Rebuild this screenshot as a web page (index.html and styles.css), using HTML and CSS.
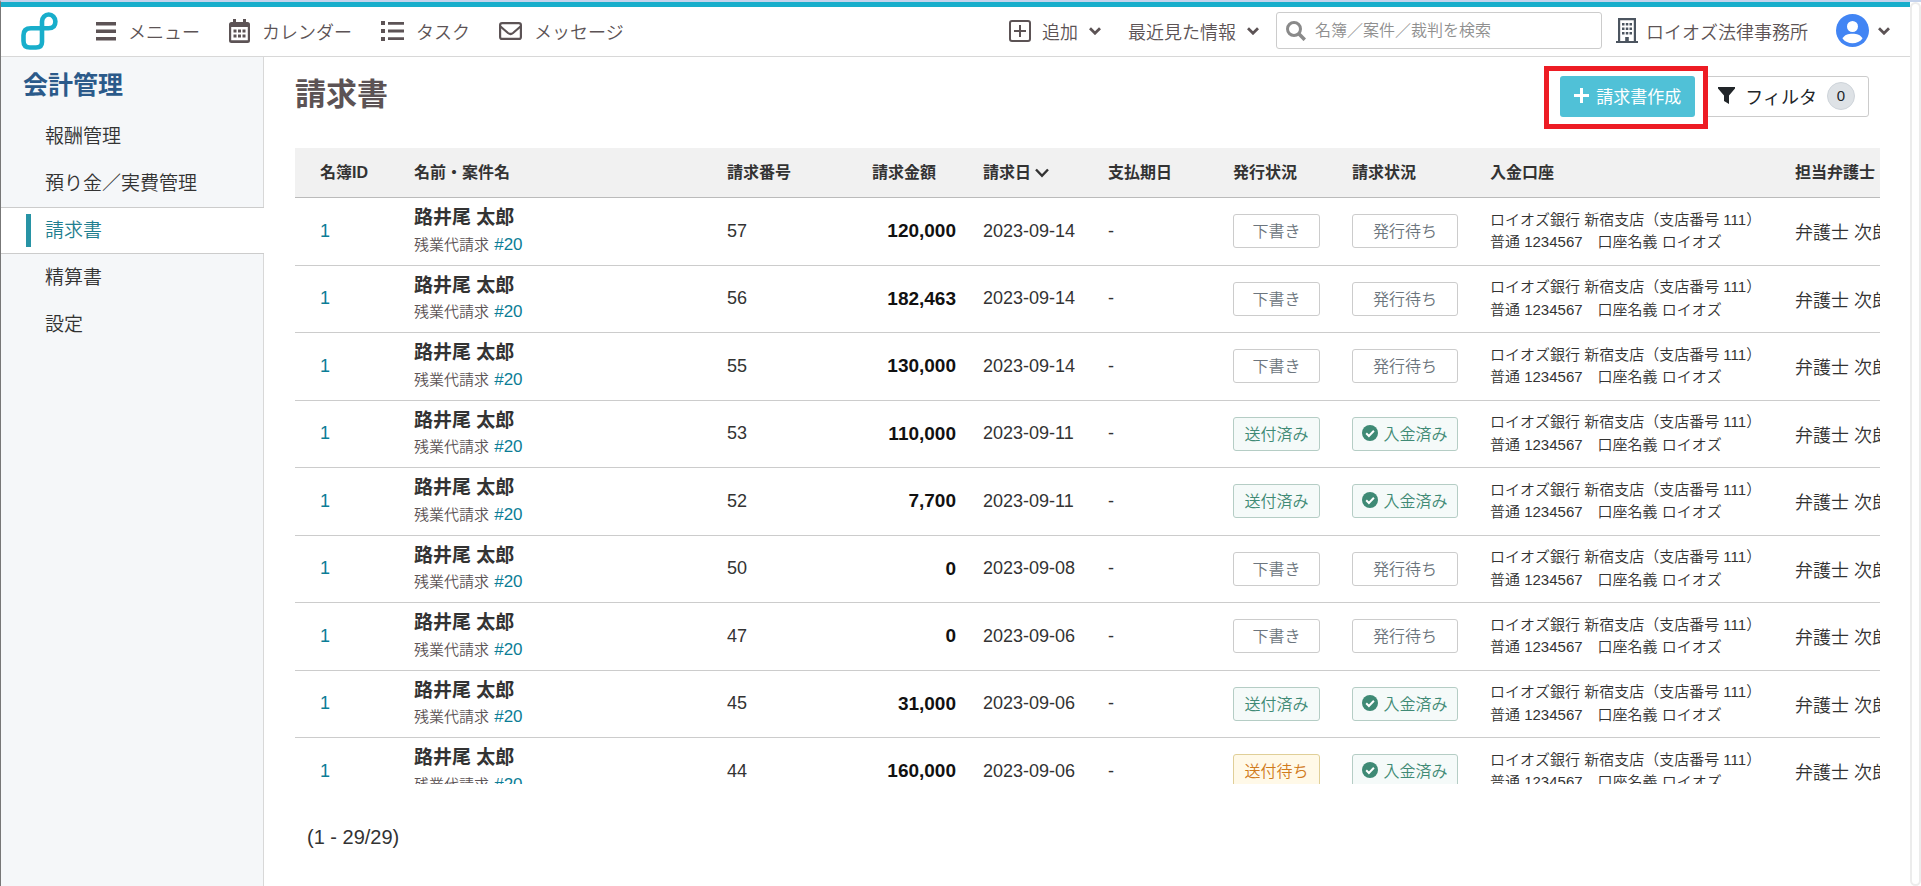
FILE: index.html
```html
<!DOCTYPE html>
<html lang="ja">
<head>
  <meta charset="UTF-8" />
  <title>請求書 | 会計管理</title>
  <meta name="viewport" content="width=device-width, initial-scale=1.0"/>
  <link rel="stylesheet" href="styles.css">
</head>
<body>
  <div class="page">
    <div class="app">
      <!-- ヘッダー -->
      <header class="header">
        <a class="logo" href="#" aria-label="ホーム">
          <svg width="40" height="42" viewBox="20 10 40 42" fill="none" stroke="#18aecb" stroke-width="4.600">
            <path d="M42 42V21.500a6.700 7 0 0 1 13.400 0c0 5-3 6.800-7 6.800H31c-5 0-7.500 2.500-7.500 7V41c0 4.500 2 6.500 6.500 6.500h6c4 0 6-2 6-5.500z"/>
          </svg>
        </a>

        <nav class="nav">
          <a href="#">
            <svg width="20" height="20" viewBox="0 0 20 20" fill="currentColor"><path d="M0 1h20v3.500H0zM0 8.500h20V12H0zM0 16h20v3.500H0z"/></svg>
            メニュー
          </a>
          <a href="#">
            <svg width="21" height="24" viewBox="0 0 21 24" fill="currentColor">
              <path fill-rule="evenodd" d="M4 0h3v3h7V0h3v3h1.500A2.500 2.500 0 0 1 21 5.500v16a2.500 2.500 0 0 1-2.500 2.500h-16A2.500 2.500 0 0 1 0 21.500v-16A2.500 2.500 0 0 1 2.500 3H4zM2.200 8v13.300h16.600V8z"/>
              <path d="M4.500 10.500h3v3h-3zM9 10.500h3v3H9zM13.500 10.500h3v3h-3zM4.500 15.500h3v3h-3zM9 15.500h3v3H9zM13.500 15.500h3v3h-3z"/>
            </svg>
            カレンダー
          </a>
          <a href="#">
            <svg width="23" height="20" viewBox="0 0 23 20" fill="currentColor"><path d="M0 0h4v4H0zM7 1h16v2.800H7zM0 8h4v4H0zM7 8.600h16v2.800H7zM0 16h4v4H0zM7 16.200h16V19H7z"/></svg>
            タスク
          </a>
          <a href="#">
            <svg width="23" height="18" viewBox="0 0 23 18" fill="none" stroke="currentColor" stroke-width="2.200"><rect x="1.100" y="1.100" width="20.800" height="15.800" rx="2"/><path d="M1.500 4.500l7.500 6.500q2.500 2 5 0l7.500-6.500"/></svg>
            メッセージ
          </a>
        </nav>

        <div class="tools">
          <button class="tool-button" type="button">
            <svg width="22" height="22" viewBox="0 0 22 22" fill="none" stroke="currentColor" stroke-width="2"><rect x="1" y="1" width="20" height="20" rx="2"/><path d="M11 5v12M5 11h12"/></svg>
            追加
            <svg class="caret" width="12" height="8" viewBox="0 0 12 8" fill="none" stroke="currentColor" stroke-width="2.800"><path d="M1 1.200l5 5 5-5"/></svg>
          </button>
          <button class="tool-button recent" type="button">
            最近見た情報
            <svg class="caret" width="12" height="8" viewBox="0 0 12 8" fill="none" stroke="currentColor" stroke-width="2.800"><path d="M1 1.200l5 5 5-5"/></svg>
          </button>
          <label class="search">
            <svg width="20" height="20" viewBox="0 0 20 20" fill="none" stroke="#8a8a8a"><circle cx="8" cy="8" r="6.500" stroke-width="3"/><path d="M12.800 12.800l6 6" stroke-width="3.600"/></svg>
            <input type="search" placeholder="名簿／案件／裁判を検索" aria-label="検索">
          </label>
          <a class="office" href="#">
            <svg width="22" height="25" viewBox="0 0 22 25" fill="#4c5560">
              <path fill-rule="evenodd" d="M2 0h18v23h2v2H0v-2h2zM4.200 2.200V23h5v-4h3.600v4h5V2.200z"/>
              <path d="M6 5h2.500v2.500H6zM9.800 5h2.500v2.500H9.800zM13.500 5H16v2.500h-2.500zM6 9.500h2.500V12H6zM9.800 9.500h2.500V12H9.800zM13.500 9.500H16V12h-2.500zM6 14h2.500v2.500H6zM9.800 14h2.500v2.500H9.800zM13.500 14H16v2.500h-2.500z"/>
            </svg>
            ロイオズ法律事務所
          </a>
          <button class="account" type="button" aria-label="アカウント">
            <svg width="33" height="33" viewBox="0 0 33 33"><circle cx="16.500" cy="16.500" r="16.500" fill="#4285f4"/><circle cx="16.500" cy="12.500" r="5.500" fill="#fff"/><path d="M6.500 24.500c2-3.700 5.500-4.700 10-4.700s8 1 10 4.700c-2.500 3.300-6 4.700-10 4.700s-7.500-1.400-10-4.700z" fill="#fff"/></svg>
            <svg class="caret" width="12" height="8" viewBox="0 0 12 8" fill="none" stroke="currentColor" stroke-width="2.800"><path d="M1 1.200l5 5 5-5"/></svg>
          </button>
        </div>
      </header>

      <div class="body">
        <!-- サイドメニュー -->
        <aside class="sidebar">
          <h2>会計管理</h2>
          <ul>
            <li><a href="#">報酬管理</a></li>
            <li><a href="#">預り金／実費管理</a></li>
            <li class="active"><a href="#" aria-current="page">請求書</a></li>
            <li><a href="#">精算書</a></li>
            <li><a href="#">設定</a></li>
          </ul>
        </aside>

        <main class="main">
          <div class="title-bar">
            <h1>請求書</h1>
            <div class="actions">
              <div class="highlight">
                <button class="create-button" type="button">
                  <svg width="15" height="15" viewBox="0 0 15 15" stroke="#fff" stroke-width="3"><path d="M7.500 0v15M0 7.500h15"/></svg>
                  請求書作成
                </button>
              </div>
              <button class="filter-button" type="button">
                <svg width="17" height="17" viewBox="0 0 17 17" fill="#212529"><path d="M0 0h17v1.500L11 8.500V17l-5-3V8.500L0 1.500z"/></svg>
                フィルタ
                <span class="count">0</span>
              </button>
            </div>
          </div>

          <!-- 請求書一覧 -->
          <div class="table-wrapper">
            <table class="invoices">
              <colgroup>
                <col class="col-id"><col class="col-name"><col class="col-number"><col class="col-amount"><col class="col-date">
                <col class="col-due"><col class="col-issue"><col class="col-status"><col class="col-bank"><col class="col-lawyer">
              </colgroup>
              <thead>
                <tr>
                  <th>名簿ID</th>
                  <th>名前・案件名</th>
                  <th>請求番号</th>
                  <th>請求金額</th>
                  <th>請求日 <svg width="14" height="10" viewBox="0 0 14 10" fill="none" stroke="#333" stroke-width="2.400"><path d="M1 1.500l6 6.300 6-6.300"/></svg></th>
                  <th>支払期日</th>
                  <th>発行状況</th>
                  <th>請求状況</th>
                  <th>入金口座</th>
                  <th>担当弁護士</th>
                </tr>
              </thead>
              <tbody id="invoiceRows"></tbody>
            </table>
          </div>
          <div class="pager">(1 - 29/29)</div>
        </main>
      </div>
    </div>
    <div class="scroll-rail"></div>
  </div>

  <script>
    const invoiceRows = document.getElementById("invoiceRows");

    // 番号, 金額, 請求日, 発行状況, 入金済みかどうか
    const invoices = [
      [57, "120,000", "2023-09-14", "下書き", false],
      [56, "182,463", "2023-09-14", "下書き", false],
      [55, "130,000", "2023-09-14", "下書き", false],
      [53, "110,000", "2023-09-11", "送付済み", true],
      [52, "7,700", "2023-09-11", "送付済み", true],
      [50, "0", "2023-09-08", "下書き", false],
      [47, "0", "2023-09-06", "下書き", false],
      [45, "31,000", "2023-09-06", "送付済み", true],
      [44, "160,000", "2023-09-06", "送付待ち", true]
    ];

    const issueClass = { "下書き": "", "送付済み": "done", "送付待ち": "waiting" };
    const check = '<svg width="16" height="16" viewBox="0 0 16 16"><circle cx="8" cy="8" r="8" fill="#3f8a75"/><path d="M4.200 8.300l2.700 2.700 5-5.200" fill="none" stroke="#fff" stroke-width="2"/></svg>';

    invoiceRows.innerHTML = invoices.map(([number, amount, date, issue, paid]) => `
      <tr>
        <td><a href="#">1</a></td>
        <td>
          <div class="client">路井尾 太郎</div>
          <div class="case">残業代請求 <a href="#">#20</a></div>
        </td>
        <td>${number}</td>
        <td class="amount">${amount}</td>
        <td>${date}</td>
        <td>-</td>
        <td><span class="badge issue ${issueClass[issue]}">${issue}</span></td>
        <td><span class="badge status ${paid ? "done" : ""}">${paid ? check + "入金済み" : "発行待ち"}</span></td>
        <td class="bank">ロイオズ銀行 新宿支店（支店番号 111）<br>普通 1234567　口座名義 ロイオズ</td>
        <td>弁護士 次郎</td>
      </tr>`).join("");
  </script>
</body>
</html>
```
FILE: styles.css
```css
/* ================================
   共通
   ================================ */
* {
  box-sizing: border-box;
}
body {
  margin: 0;
  font-family: "Liberation Sans", "Noto Sans CJK JP", sans-serif;
  font-size: 18px;
  font-weight: 350;
  color: #333;
  background: #fff;
  border-top: 2px solid #c5d3ec;
  border-left: 1px solid #777;
}
a {
  color: #0b7d96;
  text-decoration: none;
}
button {
  font: inherit;
  color: inherit;
  background: none;
  border: none;
  padding: 0;
  cursor: pointer;
}
svg {
  flex: none;
}
.page {
  display: flex;
  height: calc(100vh - 2px);
}
.app {
  flex: 1;
  min-width: 0;
  display: flex;
  flex-direction: column;
}
.scroll-rail {
  width: 11px;
  border: 2px solid #ececec;
  border-radius: 6px;
}

/* ================================
   ヘッダー
   ================================ */
.header {
  display: flex;
  align-items: center;
  height: 55px;
  padding: 0 20px 2px 19px;
  border-top: 5px solid #18aecb;
  border-bottom: 1px solid #d8d8d8;
  color: #5c5355;
  white-space: nowrap;
}
.logo {
  display: flex;
}
.nav {
  display: flex;
  gap: 29px;
  margin-left: 36px;
}
.nav a,
.office {
  display: flex;
  align-items: center;
  gap: 12px;
  color: inherit;
}
.tools {
  display: flex;
  align-items: center;
  margin-left: auto;
}
.tool-button {
  display: flex;
  align-items: center;
  gap: 11px;
  margin-right: 27px;
}
.recent {
  margin-right: 17px;
}
.search {
  display: flex;
  align-items: center;
  gap: 9px;
  width: 326px;
  height: 37px;
  padding: 0 9px;
  border: 1px solid #ccc;
  border-radius: 3px;
}
.search input {
  flex: 1;
  min-width: 0;
  border: none;
  outline: none;
  padding: 0;
  font: inherit;
  font-size: 16px;
  background: none;
}
.search input::placeholder {
  color: #8f8f8f;
}
.office {
  gap: 8px;
  margin-left: 14px;
}
.account {
  display: flex;
  align-items: center;
  gap: 9px;
  margin-left: 28px;
}

/* ================================
   サイドメニュー
   ================================ */
.body {
  flex: 1;
  display: flex;
  min-height: 0;
}
.sidebar {
  width: 263px;
  background: #f5f7f9;
  box-shadow: inset -1px 0 #d8d8d8;
}
.sidebar h2 {
  margin: 0;
  padding: 10px 0 10px 22px;
  font-size: 25px;
  line-height: 36px;
  color: #2b5a8a;
}
.sidebar ul {
  list-style: none;
  margin: 0;
  padding: 0;
}
.sidebar a {
  display: block;
  padding-left: 44px;
  font-size: 19px;
  line-height: 47px;
  color: #333;
}
.sidebar .active {
  display: flex;
  align-items: center;
  padding-left: 25px;
  background: #fff;
  border-top: 1px solid #ccc;
  border-bottom: 1px solid #ccc;
}
.sidebar .active a {
  flex: 1;
  padding-left: 0;
  line-height: 45px;
  color: #1f7f90;
}
.active::before {
  content: "";
  width: 5px;
  height: 33px;
  margin-right: 14px;
  background: #2793a5;
}

/* ================================
   タイトル + ボタン
   ================================ */
.main {
  flex: 1;
  min-width: 0;
  padding: 19px 30px 0 31px;
}
.title-bar {
  display: flex;
  justify-content: space-between;
  align-items: flex-start;
  height: 72px;
}
.title-bar h1 {
  margin: 0;
  font-size: 31px;
  line-height: 38px;
  color: #5c5355;
}
.actions {
  display: flex;
  gap: 8px;
  margin-right: 11px;
}
.highlight {
  position: relative;
}
.highlight::after {
  content: "";
  position: absolute;
  z-index: 1;
  inset: -10px -13px -12px -16px;
  border: 5px solid #ed1c24;
  pointer-events: none;
}
.create-button,
.filter-button {
  display: flex;
  align-items: center;
  height: 41px;
  padding-bottom: 2px;
  border-radius: 3px;
}
.create-button {
  gap: 7px;
  padding: 0 14px 2px;
  font-size: 17px;
  font-weight: 400;
  color: #fff;
  background: #50c1d7;
}
.filter-button {
  gap: 10px;
  padding: 0 13px 2px 14px;
  font-weight: 400;
  color: #212529;
  border: 1px solid #ccc;
}
.count {
  width: 28px;
  border: 1px solid #ced4da;
  border-radius: 14px;
  background: #dee2e6;
  font-size: 15px;
  line-height: 26px;
  text-align: center;
}

/* ================================
   請求書一覧
   ================================ */
.table-wrapper {
  height: calc(100vh - 250px);
  overflow: auto;
  scrollbar-width: none;
}
.invoices {
  width: 1688px;
  table-layout: fixed;
  border-collapse: separate;
  border-spacing: 0;
  white-space: nowrap;
}
.col-id { width: 107px; }
.col-name { width: 313px; }
.col-number { width: 145px; }
.col-amount { width: 111px; }
.col-date,
.col-due { width: 125px; }
.col-issue { width: 119px; }
.col-status { width: 138px; }
.col-bank { width: 305px; }
.col-lawyer { width: 200px; }
.invoices th {
  height: 50px;
  padding: 0 12px 4px;
  font-size: 16px;
  text-align: left;
  background: #f1f1f1;
  border-bottom: 1px solid #bbb;
}
.invoices td {
  padding: 7px 12px;
  border-bottom: 1px solid #ccc;
}
.invoices th:first-child,
.invoices td:first-child {
  padding-left: 25px;
}
.invoices td:nth-child(2) {
  padding-top: 6px;
  padding-bottom: 8px;
}
.client {
  font-size: 19px;
  font-weight: bold;
  line-height: 1.5;
}
.case {
  font-size: 15px;
  line-height: 1.6;
  color: #5c5355;
}
.case a {
  margin-left: 1px;
  font-size: 17px;
  line-height: 1;
}
.invoices .amount {
  padding-right: 15px;
  font-size: 19px;
  font-weight: bold;
  color: #111;
  text-align: right;
}
.invoices .bank {
  font-size: 15px;
  line-height: 1.5;
}

/* ステータス */
.badge {
  display: flex;
  align-items: center;
  justify-content: center;
  gap: 5px;
  height: 34px;
  padding-bottom: 2px;
  border: 1px solid #ccc;
  border-radius: 3px;
  font-size: 16px;
  color: #6c757d;
}
.issue {
  width: 87px;
}
.status {
  width: 106px;
}
.done {
  color: #3f8a75;
  background: #f5faf9;
  border-color: #b5cdc5;
}
.waiting {
  color: #d17b1c;
  background: #fff9e8;
  border-color: #e0cf98;
}

.pager {
  padding: 39px 12px 0;
  font-size: 20px;
  line-height: 28px;
}
```
